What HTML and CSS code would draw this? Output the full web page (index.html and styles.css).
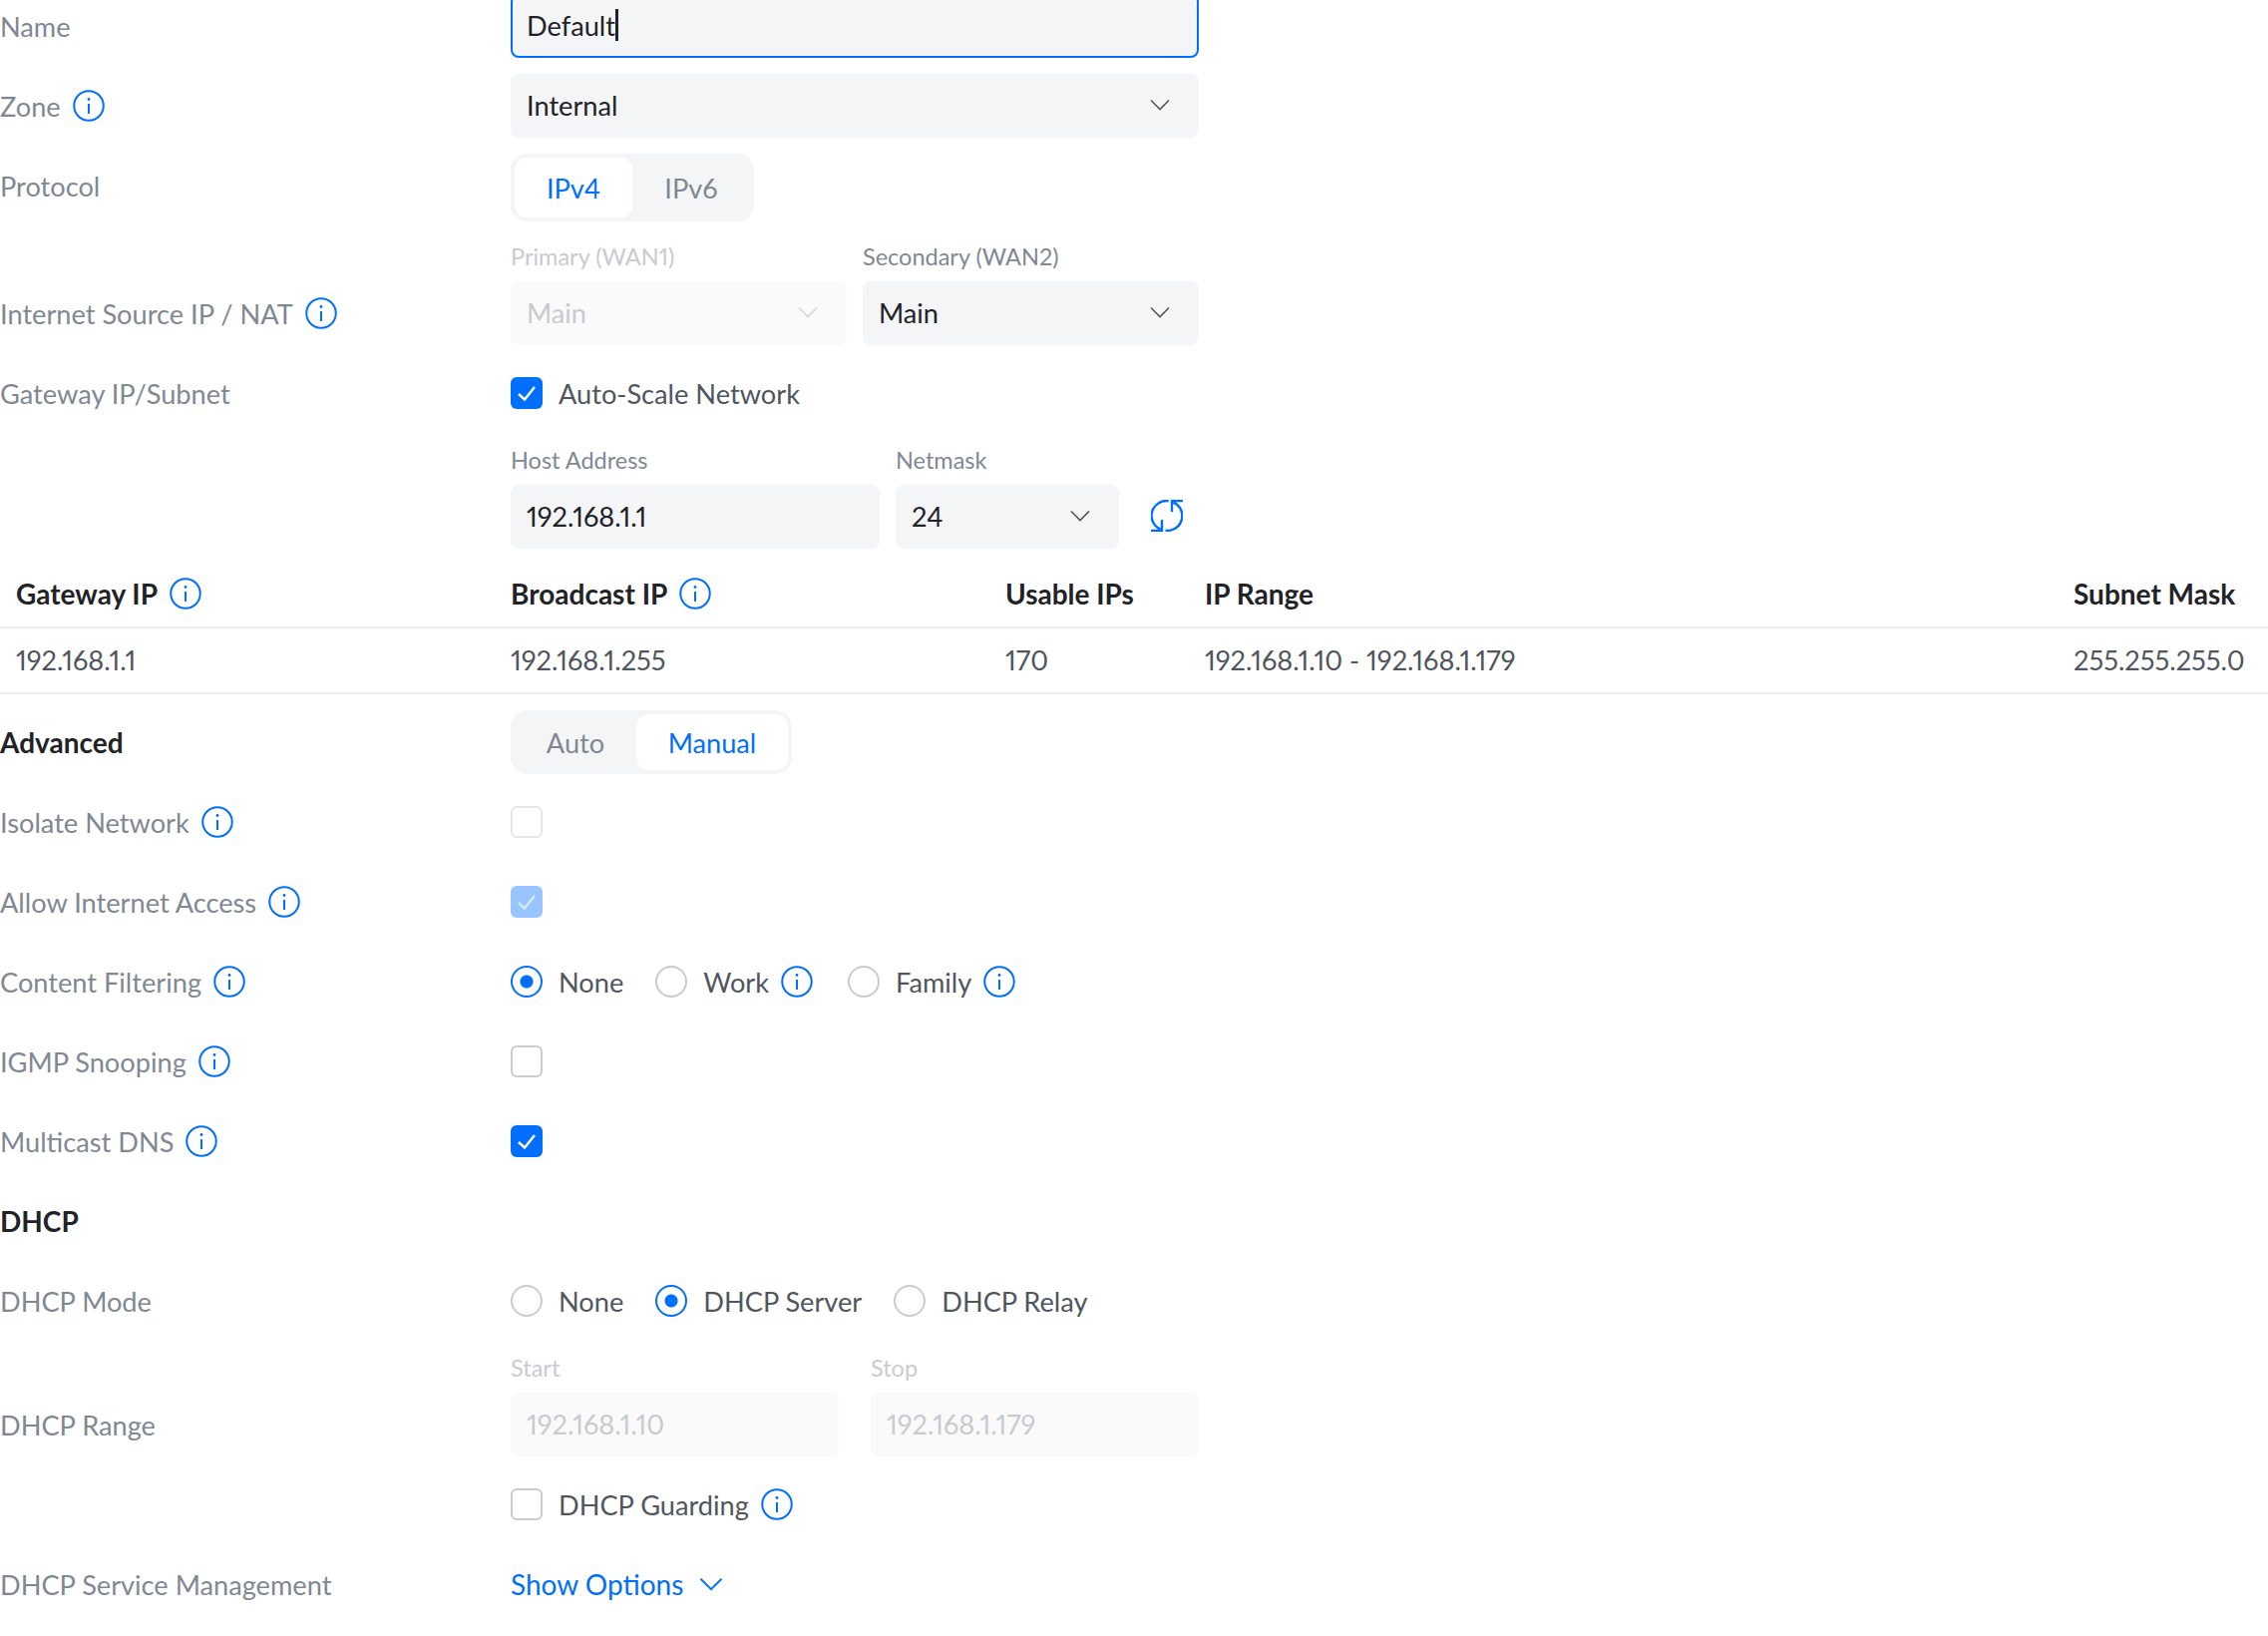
FILE: index.html
```html
<!DOCTYPE html>
<html lang="en">
<head>
    <meta charset="UTF-8">
    <meta name="viewport" content="width=device-width, initial-scale=1.0">
    <title>Network settings</title>
    <link rel="stylesheet" href="styles.css">
</head>
<body>
    <!-- icons used all over the form -->
    <svg class="sprite" xmlns="http://www.w3.org/2000/svg">
        <symbol id="info" viewBox="0 0 32 32">
            <circle cx="16" cy="16" r="14.75" fill="none" stroke="currentColor" stroke-width="2"/>
            <circle cx="16" cy="9.5" r="1.4" fill="currentColor"/>
            <path d="M16 14v10" fill="none" stroke="currentColor" stroke-width="2"/>
        </symbol>
        <symbol id="chevron" viewBox="0 0 20 12">
            <path d="M1 1.5L10 10.5l9-9" fill="none" stroke="currentColor" stroke-width="1.6"/>
        </symbol>
        <symbol id="tick" viewBox="0 0 32 32">
            <path d="M8 17l6 5.5L24 10" fill="none" stroke="currentColor" stroke-width="2.4"/>
        </symbol>
    </svg>

    <div class="form">
        <div class="row">
            <div class="label">Name</div>
            <div class="input input-focus">Default<span class="caret"></span></div>
        </div>

        <div class="row">
            <div class="label">Zone <svg class="info"><use href="#info"/></svg></div>
            <div class="input select">Internal <svg class="chevron"><use href="#chevron"/></svg></div>
        </div>

        <div class="row row-top">
            <div class="label">Protocol</div>
            <div class="segment segment-tall">
                <div class="segment-item segment-on">IPv4</div>
                <div class="segment-item">IPv6</div>
            </div>
        </div>

        <div class="row row-bottom">
            <div class="label">Internet Source IP / NAT <svg class="info"><use href="#info"/></svg></div>
            <div class="split">
                <div class="field">
                    <div class="field-label field-label-off">Primary (WAN1)</div>
                    <div class="input select input-disabled">Main <svg class="chevron"><use href="#chevron"/></svg></div>
                </div>
                <div class="field">
                    <div class="field-label">Secondary (WAN2)</div>
                    <div class="input select">Main <svg class="chevron"><use href="#chevron"/></svg></div>
                </div>
            </div>
        </div>

        <div class="row">
            <div class="label">Gateway IP/Subnet</div>
            <div class="choices">
                <div class="choice">
                    <span class="check check-on"><svg class="tick"><use href="#tick"/></svg></span>
                    Auto-Scale Network
                </div>
            </div>
        </div>

        <div class="row row-bottom row-tight">
            <div class="label"></div>
            <div class="host-grid">
                <div class="field">
                    <div class="field-label">Host Address</div>
                    <div class="input">192.168.1.1</div>
                </div>
                <div class="field">
                    <div class="field-label">Netmask</div>
                    <div class="input select">24 <svg class="chevron"><use href="#chevron"/></svg></div>
                </div>
                <svg class="refresh" viewBox="0 0 32 32">
                    <path d="M17.6 1.2A14.8 14.8 0 0 0 9.5 29.4M0 31h11V20M14.5 30.8A14.8 14.8 0 0 0 22.5 2.6M32 1H21v11" fill="none" stroke="currentColor" stroke-width="2.4"/>
                </svg>
            </div>
        </div>

        <table class="summary">
            <thead>
                <tr>
                    <th class="col-gateway"><span class="th-inner">Gateway IP <svg class="info"><use href="#info"/></svg></span></th>
                    <th class="col-broadcast"><span class="th-inner">Broadcast IP <svg class="info"><use href="#info"/></svg></span></th>
                    <th class="col-usable">Usable IPs</th>
                    <th class="col-range">IP Range</th>
                    <th>Subnet Mask</th>
                </tr>
            </thead>
            <tbody>
                <tr>
                    <td class="col-gateway">192.168.1.1</td>
                    <td>192.168.1.255</td>
                    <td>170</td>
                    <td>192.168.1.10 - 192.168.1.179</td>
                    <td>255.255.255.0</td>
                </tr>
            </tbody>
        </table>

        <div class="row">
            <div class="label label-strong">Advanced</div>
            <div class="segment">
                <div class="segment-item segment-auto">Auto</div>
                <div class="segment-item segment-on segment-manual">Manual</div>
            </div>
        </div>

        <div class="row">
            <div class="label">Isolate Network <svg class="info"><use href="#info"/></svg></div>
            <div class="choices"><span class="check check-dim"></span></div>
        </div>

        <div class="row">
            <div class="label">Allow Internet Access <svg class="info"><use href="#info"/></svg></div>
            <div class="choices"><span class="check check-faded"><svg class="tick"><use href="#tick"/></svg></span></div>
        </div>

        <div class="row">
            <div class="label">Content Filtering <svg class="info"><use href="#info"/></svg></div>
            <div class="choices">
                <div class="choice"><span class="radio radio-on"></span>None</div>
                <div class="choice"><span class="radio"></span>Work <svg class="info"><use href="#info"/></svg></div>
                <div class="choice"><span class="radio"></span>Family <svg class="info"><use href="#info"/></svg></div>
            </div>
        </div>

        <div class="row">
            <div class="label">IGMP Snooping <svg class="info"><use href="#info"/></svg></div>
            <div class="choices"><span class="check"></span></div>
        </div>

        <div class="row">
            <div class="label">Multicast DNS <svg class="info"><use href="#info"/></svg></div>
            <div class="choices"><span class="check check-on"><svg class="tick"><use href="#tick"/></svg></span></div>
        </div>

        <div class="row">
            <div class="label label-strong">DHCP</div>
        </div>

        <div class="row">
            <div class="label">DHCP Mode</div>
            <div class="choices">
                <div class="choice"><span class="radio"></span>None</div>
                <div class="choice"><span class="radio radio-on"></span>DHCP Server</div>
                <div class="choice"><span class="radio"></span>DHCP Relay</div>
            </div>
        </div>

        <div class="row row-bottom">
            <div class="label">DHCP Range</div>
            <div class="range-grid">
                <div class="field">
                    <div class="field-label field-label-off">Start</div>
                    <div class="input input-disabled">192.168.1.10</div>
                </div>
                <div class="field">
                    <div class="field-label field-label-off">Stop</div>
                    <div class="input input-disabled">192.168.1.179</div>
                </div>
            </div>
        </div>

        <div class="row">
            <div class="label"></div>
            <div class="choices">
                <div class="choice"><span class="check"></span>DHCP Guarding <svg class="info"><use href="#info"/></svg></div>
            </div>
        </div>

        <div class="row">
            <div class="label">DHCP Service Management</div>
            <div class="show-options">Show Options <svg class="chevron-blue"><use href="#chevron"/></svg></div>
        </div>
    </div>
</body>
</html>
```

FILE: styles.css
```css
body {
    font-family: "Lato", "Noto Sans", sans-serif;
    font-size: 27.2px;
    font-variant-numeric: proportional-nums;
    margin: 0;
    background-color: #fff;
    color: #50565e;
    overflow: hidden;
}

.sprite {
    display: none;
}

.form {
    display: flex;
    flex-direction: column;
    gap: 16px;
    margin-top: -6px;
}

.row {
    display: grid;
    grid-template-columns: 512px 690px;
    align-items: center;
    min-height: 64px;
}

.row-top {
    align-items: start;
}

.row-bottom {
    align-items: end;
}

.row-tight {
    margin-bottom: -16px;
}

.label {
    display: flex;
    align-items: center;
    gap: 12px;
    height: 64px;
    color: #808893;
}

.label-strong {
    font-size: 28px;
    font-weight: 700;
    color: #212327;
}

.info {
    width: 32px;
    height: 32px;
    color: #006fff;
    flex-shrink: 0;
}

/* inputs and selects */
.input {
    display: flex;
    align-items: center;
    height: 64px;
    box-sizing: border-box;
    padding: 0 16px 2px;
    background-color: #f4f5f6;
    border-radius: 8px;
    color: #212327;
}

.input-focus {
    border: 2px solid #006fff;
    padding: 0 14px 2px;
}

.caret {
    display: inline-block;
    width: 3px;
    height: 32px;
    background-color: #212327;
}

.select {
    justify-content: space-between;
}

.input-disabled {
    background-color: #fafafa;
    color: #c8cbd0;
}

.chevron {
    width: 20px;
    height: 12px;
    margin-right: 4px;
    color: #50565e;
}

.select .chevron {
    margin-right: 13px;
}

.input-disabled .chevron {
    color: #d5d7da;
}

.split {
    display: grid;
    grid-template-columns: 337px 337px;
    gap: 16px;
}

.host-grid {
    display: grid;
    grid-template-columns: 370px 224px 32px;
    gap: 16px;
    align-items: end;
}

.range-grid {
    display: grid;
    grid-template-columns: 329px 329px;
    gap: 32px;
}

.field-label {
    height: 38px;
    line-height: 38px;
    margin-bottom: 6px;
    font-size: 23.5px;
    color: #808893;
}

.field-label-off {
    color: #c8cbd0;
}

.refresh {
    width: 32px;
    height: 32px;
    margin-left: 16px;
    margin-bottom: 17px;
    color: #006fff;
}

/* segmented buttons */
.segment {
    display: inline-flex;
    justify-self: start;
    box-sizing: border-box;
    height: 64px;
    padding: 4px;
    background-color: #f4f5f6;
    border-radius: 16px;
}

.segment-tall {
    height: 68px;
}

.segment-item {
    display: flex;
    align-items: center;
    justify-content: center;
    width: 118px;
    border-radius: 12px;
    color: #808893;
}

.segment-on {
    background-color: #fff;
    color: #006fff;
}

.segment-auto {
    width: 122px;
}

.segment-manual {
    width: 152px;
}

/* checks and radios */
.choices {
    display: flex;
    align-items: center;
    gap: 32px;
}

.choice {
    display: flex;
    align-items: center;
    gap: 16px;
}

.choice .info {
    margin-left: -4px;
    margin-right: 3px;
}

.check {
    display: block;
    box-sizing: border-box;
    width: 32px;
    height: 32px;
    border: 2px solid #c8cbd0;
    border-radius: 6px;
    flex-shrink: 0;
}

.check-dim {
    border-color: #e4e6e8;
}

.check-on {
    border: 0;
    background-color: #006fff;
    color: #fff;
}

.check-faded {
    border: 0;
    background-color: #99c5ff;
    color: #d6e8ff;
}

.tick {
    display: block;
    width: 32px;
    height: 32px;
}

.radio {
    display: block;
    box-sizing: border-box;
    width: 32px;
    height: 32px;
    border: 2px solid #c8cbd0;
    border-radius: 50%;
    flex-shrink: 0;
}

.radio-on {
    border-color: #006fff;
    background: radial-gradient(circle, #006fff 0 6px, transparent 7px);
}

.show-options {
    display: flex;
    align-items: center;
    gap: 16px;
    font-size: 28px;
    color: #006fff;
}

.chevron-blue {
    width: 24px;
    height: 14px;
    color: #006fff;
}

/* summary table */
.summary {
    width: 100%;
    table-layout: fixed;
    border-collapse: collapse;
}

.summary th {
    height: 79px;
    padding: 12px 0 0;
    box-sizing: border-box;
    text-align: left;
    font-size: 28px;
    font-weight: 700;
    color: #212327;
    border-bottom: 2px solid #ededf0;
}

.summary td {
    height: 66px;
    padding: 0 0 2px;
    box-sizing: border-box;
    border-bottom: 2px solid #ededf0;
}

.th-inner {
    display: flex;
    align-items: center;
    gap: 12px;
}

.summary .col-gateway {
    width: 512px;
    padding-left: 16px;
    box-sizing: border-box;
}

.col-broadcast {
    width: 496px;
}

.col-usable {
    width: 200px;
}

.col-range {
    width: 871px;
}
```
